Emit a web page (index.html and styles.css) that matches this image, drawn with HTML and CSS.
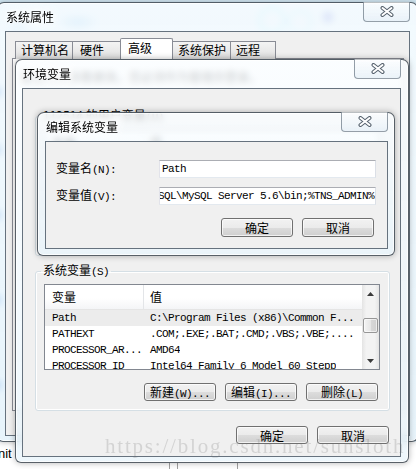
FILE: index.html
```html
<!DOCTYPE html>
<html lang="zh-CN">
<head>
    <meta charset="UTF-8">
    <title>编辑系统变量</title>
    <link rel="stylesheet" href="styles.css">
</head>
<body>
    <div class="desk"></div>
    <span class="behind">nit</span>

    <!-- 系统属性 -->
    <div class="win sys">
        <div class="titlebar">
            <span class="title">系统属性</span>
            <span class="close"><svg width="14" height="11" viewBox="0 0 14 11"><path d="M2.5 2L11.5 9M11.5 2L2.5 9" stroke="#56616d" stroke-width="4" stroke-linecap="round"/><path d="M2.5 2L11.5 9M11.5 2L2.5 9" stroke="#fff" stroke-width="2" stroke-linecap="round"/></svg></span>
        </div>
        <div class="client">
            <div class="tabs">
                <span class="tab">计算机名</span>
                <span class="tab">硬件</span>
                <span class="tab on">高级</span>
                <span class="tab">系统保护</span>
                <span class="tab">远程</span>
            </div>
            <div class="tabpage">
                <p class="note">要进行大多数更改，您必须作为管理员登录。</p>
            </div>
        </div>
    </div>

    <!-- 环境变量 -->
    <div class="win env">
        <div class="titlebar">
            <span class="title">环境变量</span>
            <span class="close"><svg width="14" height="11" viewBox="0 0 14 11"><path d="M2.5 2L11.5 9M11.5 2L2.5 9" stroke="#56616d" stroke-width="4" stroke-linecap="round"/><path d="M2.5 2L11.5 9M11.5 2L2.5 9" stroke="#fff" stroke-width="2" stroke-linecap="round"/></svg></span>
        </div>
        <div class="client">
            <!-- mostly hidden under the edit dialog -->
            <fieldset class="group">
                <legend>112514 的用户变量<span class="k">(U)</span></legend>
                <div class="list">
                    <div class="lv">
                        <div class="lv-head"><span class="c1">变量</span><span class="c2">值</span></div>
                    </div>
                </div>
            </fieldset>

            <fieldset class="group">
                <legend>系统变量<span class="k">(S)</span></legend>
                <div class="list">
                    <div class="lv">
                        <div class="lv-head"><span class="c1">变量</span><span class="c2">值</span></div>
                        <div class="lv-row sel"><span class="c1 k">Path</span><span class="c2 k">C:\Program Files (x86)\Common F...</span></div>
                        <div class="lv-row"><span class="c1 k">PATHEXT</span><span class="c2 k">.COM;.EXE;.BAT;.CMD;.VBS;.VBE;....</span></div>
                        <div class="lv-row"><span class="c1 k">PROCESSOR_AR...</span><span class="c2 k">AMD64</span></div>
                        <div class="lv-row"><span class="c1 k">PROCESSOR_ID</span><span class="c2 k">Intel64 Family 6 Model 60 Stepp</span></div>
                    </div>
                    <div class="vscroll">
                        <span class="arrow"><svg width="7" height="4" viewBox="0 0 7 4"><polygon points="0,4 3.5,0 7,4" fill="#3a3a3a"/></svg></span>
                        <span class="track"><span class="thumb"></span></span>
                        <span class="arrow"><svg width="7" height="4" viewBox="0 0 7 4"><polygon points="0,0 7,0 3.5,4" fill="#3a3a3a"/></svg></span>
                    </div>
                </div>
                <div class="btnrow">
                    <button class="btn">新建<span class="k">(W)...</span></button>
                    <button class="btn">编辑<span class="k">(I)...</span></button>
                    <button class="btn">删除<span class="k">(L)</span></button>
                </div>
            </fieldset>

            <div class="btnrow foot">
                <button class="btn">确定</button>
                <button class="btn">取消</button>
            </div>
        </div>
    </div>

    <!-- 编辑系统变量 -->
    <div class="win edit">
        <div class="titlebar">
            <span class="title">编辑系统变量</span>
            <span class="close"><svg width="14" height="11" viewBox="0 0 14 11"><path d="M2.5 2L11.5 9M11.5 2L2.5 9" stroke="#56616d" stroke-width="4" stroke-linecap="round"/><path d="M2.5 2L11.5 9M11.5 2L2.5 9" stroke="#fff" stroke-width="2" stroke-linecap="round"/></svg></span>
        </div>
        <div class="client">
            <div class="form">
                <label>变量名<span class="k">(N):</span></label>
                <div class="field k">Path</div>
                <label>变量值<span class="k">(V):</span></label>
                <div class="field k"><span class="scrolled">SQL\MySQL Server 5.6\bin;%TNS_ADMIN%</span></div>
            </div>
            <div class="btnrow">
                <button class="btn">确定</button>
                <button class="btn">取消</button>
            </div>
        </div>
    </div>

    <div class="wm">https://blog.csdn.net/sunsloth</div>
</body>
</html>
```

FILE: styles.css
```css
* {
    box-sizing: border-box;
}

body {
    margin: 0;
    width: 416px;
    height: 469px;
    overflow: hidden;
    position: relative;
    font-family: "Noto Sans CJK SC", "Liberation Sans", sans-serif;
    font-size: 12px;
    line-height: 16px;
    color: #000;
    background: #fff;
}

/* whatever sits behind the glass */
.desk {
    position: absolute;
    inset: 0;
    background:
        radial-gradient(circle at 328px 17px, #4a68dc 0, rgba(74,104,220,0) 8px),
        radial-gradient(circle at 272px 20px, rgba(150,225,245,0) 9px, rgba(150,225,245,.9) 12px, rgba(150,225,245,0) 16px),
        radial-gradient(circle at 300px 22px, rgba(150,225,245,0) 8px, rgba(150,225,245,.7) 11px, rgba(150,225,245,0) 14px),
        radial-gradient(ellipse 22px 9px at 78px 22px, rgba(120,190,240,.8), rgba(120,190,240,0)),
        radial-gradient(ellipse 14px 8px at 18px 25px, rgba(120,190,240,.7), rgba(120,190,240,0)),
        radial-gradient(ellipse 6px 9px at 0 92px, rgba(70,140,225,.9), rgba(70,140,225,0)),
        radial-gradient(ellipse 6px 9px at 0 150px, rgba(70,140,225,.8), rgba(70,140,225,0)),
        radial-gradient(ellipse 6px 9px at 0 215px, rgba(70,140,225,.8), rgba(70,140,225,0)),
        radial-gradient(ellipse 6px 9px at 0 300px, rgba(70,140,225,.8), rgba(70,140,225,0)),
        radial-gradient(ellipse 6px 9px at 0 385px, rgba(70,140,225,.8), rgba(70,140,225,0)),
        linear-gradient(90deg, transparent 169px, #a0a0a0 169px 170px, transparent 170px 177px, #a0a0a0 177px 178px, transparent 178px 237px, #a0a0a0 237px 238px, transparent 238px) 0 462px / 100% 7px no-repeat,
        linear-gradient(#d6ecf8, #e4f2fa) 0 0 / 100% 442px no-repeat,
        #fff;
}

.behind {
    position: absolute;
    left: -2px;
    top: 447px;
    font-family: "Liberation Sans", sans-serif;
    font-size: 13px;
    line-height: 14px;
}

/* windows */
.win {
    position: absolute;
    display: flex;
    flex-direction: column;
    border: 1px solid rgba(20, 30, 40, .7);
    border-radius: 7px 7px 6px 6px;
    background: linear-gradient(rgba(250,253,255,.8), rgba(232,244,251,.76));
    backdrop-filter: blur(3px);
    box-shadow: 0 0 6px rgba(0,0,0,.3), inset 0 0 0 1px rgba(255,255,255,.75);
}

.sys {
    left: -3px;
    top: 2px;
    width: 421px;
    height: 440px;
    padding: 0 7px 5px 7px;
}

.env {
    left: 15px;
    top: 59px;
    width: 394px;
    height: 404px;
    padding: 0 7px 5px 6px;
}

.edit {
    left: 37px;
    top: 112px;
    width: 358px;
    height: 144px;
    padding: 0 6px 6px 7px;
}

.titlebar {
    height: 28px;
    flex-shrink: 0;
    display: flex;
    align-items: center;
}

.title {
    padding-left: 1px;
    text-shadow: 0 0 6px #fff, 0 0 10px #fff, 0 0 12px #fff;
}

.close {
    margin-left: auto;
    align-self: flex-start;
    margin-top: -1px;
    width: 47px;
    height: 20px;
    display: flex;
    align-items: center;
    justify-content: center;
    border: 1px solid rgba(80, 95, 110, .6);
    border-top: 0;
    border-radius: 0 0 4px 4px;
    background: linear-gradient(rgba(255,255,255,.6), rgba(228,238,246,.7));
}

.client {
    flex: 1;
    min-height: 0;
    border: 1px solid #66727e;
    background: #f0f0f0;
}

/* half-width latin, like the system bitmap font */
.k {
    font-family: "Liberation Mono", monospace;
    font-size: 11px;
    letter-spacing: -0.6px;
}

/* 系统属性 */
.tabs {
    display: flex;
    align-items: flex-end;
    height: 21px;
    margin: 6px 0 -1px 9px;
    position: relative;
    z-index: 1;
}

.tab {
    height: 18px;
    margin-left: -1px;
    padding-left: 5px;
    border: 1px solid #898c95;
    border-bottom: 0;
    background: linear-gradient(#f4f4f4, #eaeaea 50%, #dcdcdc);
    line-height: 16px;
}

.tab:nth-child(1) { width: 58px; margin-left: 0; }
.tab:nth-child(2) { width: 49px; padding-left: 7px; }
.tab:nth-child(3) { width: 53px; }
.tab:nth-child(4) { width: 59px; }
.tab:nth-child(5) { width: 46px; }

.tab.on {
    height: 21px;
    padding-left: 7px;
    background: #fff;
    border-radius: 2px 2px 0 0;
    line-height: 18px;
}

.tabpage {
    height: 353px;
    margin: 0 5px 0 6px;
    border: 1px solid #898c95;
    background: #fff;
}

.note {
    margin: 11px 0 0 8px;
    line-height: 14px;
}

/* 环境变量 */
.env .client {
    padding: 18px 10px 0 12px;
}

.group {
    margin: 0;
    height: 149px;
    padding: 4px 9px 11px 8px;
    border: 1px solid #d5dfe5;
    border-radius: 3px;
    box-shadow: inset 0 0 0 1px #fff;
}

.group + .group {
    margin-top: 6px;
}

.group legend {
    margin-left: -3px;
    padding: 0 2px;
    line-height: 16px;
}

.list {
    display: flex;
    height: 86px;
    border: 1px solid #828790;
    background: #fff;
    overflow: hidden;
}

.lv {
    flex: 1;
    min-width: 0;
}

.lv-head {
    display: flex;
    height: 25px;
    align-items: stretch;
    line-height: 24px;
    background: linear-gradient(#fff, #fff 55%, #f4f5f7);
    border-bottom: 1px solid #e5e5e5;
}

.lv-row {
    display: flex;
    height: 16px;
    line-height: 16px;
}

.lv-row.sel {
    background: #ececec;
}

.c1 {
    width: 99px;
    flex-shrink: 0;
    padding-left: 7px;
    white-space: nowrap;
    overflow: hidden;
}

.lv-head .c1 {
    border-right: 1px solid #e3e5e8;
}

.c2 {
    padding-left: 6px;
    white-space: nowrap;
    overflow: hidden;
}

.vscroll {
    width: 17px;
    display: flex;
    flex-direction: column;
    background: linear-gradient(90deg, #e4e4e4, #f3f3f3 25%, #f3f3f3 75%, #e4e4e4);
}

.arrow {
    height: 17px;
    display: flex;
    align-items: center;
    justify-content: center;
}

.track {
    flex: 1;
}

.thumb {
    display: block;
    height: 15px;
    margin: 16px 1px 0;
    border: 1px solid #979797;
    border-radius: 2px;
    background: linear-gradient(90deg, #f4f4f4, #e6e6e6 50%, #d8d8d8 50%, #d0d0d0);
    box-shadow: inset 0 0 0 1px rgba(255,255,255,.6);
}

.btnrow {
    display: flex;
    justify-content: flex-end;
    gap: 9px;
    margin-top: 13px;
    margin-right: 2px;
}

.foot {
    margin-top: 15px;
    margin-right: 1px;
}

.btn {
    width: 72px;
    height: 18px;
    padding: 0;
    border: 1px solid #707070;
    border-radius: 3px;
    background: linear-gradient(#f2f2f2, #ebebeb 50%, #dddddd 50%, #cfcfcf);
    box-shadow: inset 0 0 0 1px rgba(255,255,255,.7);
    font: inherit;
    line-height: 15px;
    color: #000;
}

/* 编辑系统变量 */
.form {
    display: grid;
    grid-template-columns: 103px 217px;
    row-gap: 9px;
    align-items: center;
    padding: 18px 0 0 10px;
}

.field {
    height: 18px;
    padding: 0 2px;
    border: 1px solid;
    border-color: #abadb3 #dbdfe6 #e3e9ef #e2e3ea;
    background: #fff;
    line-height: 16px;
    white-space: nowrap;
    overflow: hidden;
}

.scrolled {
    margin-left: -4px;
}

.edit .btnrow {
    margin-right: 13px;
}

.edit .btn {
    height: 19px;
    line-height: 16px;
}

.wm {
    position: absolute;
    left: 105px;
    top: 434px;
    font-family: "Liberation Serif", serif;
    font-size: 21px;
    line-height: 24px;
    letter-spacing: 1.8px;
    color: rgba(110, 110, 110, .22);
    white-space: nowrap;
    pointer-events: none;
}
```
